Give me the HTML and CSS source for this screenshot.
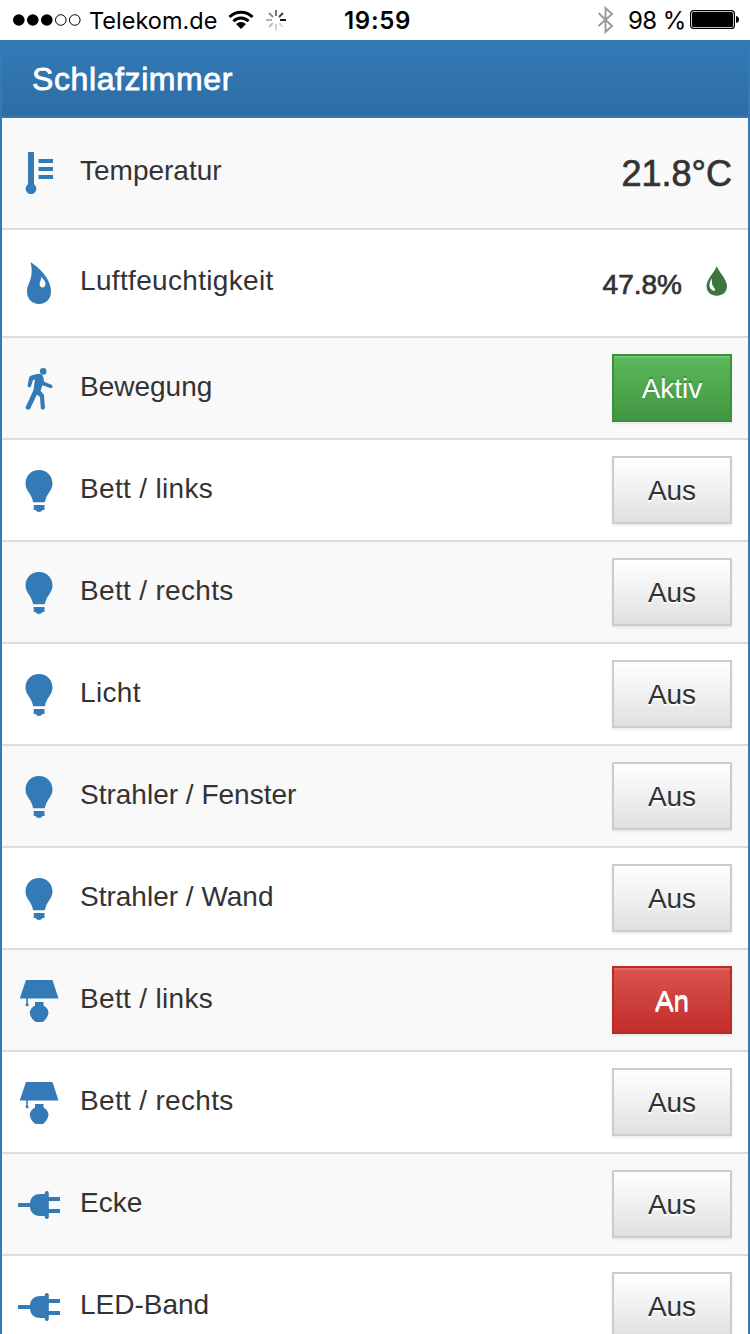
FILE: index.html
```html
<!DOCTYPE html>
<html lang="de">
<head>
<meta charset="utf-8">
<title>Schlafzimmer</title>
<link rel="stylesheet" href="styles.css">
</head>
<body>
<svg class="sprite" width="0" height="0" aria-hidden="true">
  <symbol id="thermo" viewBox="0 0 42 42"><path d="M10 0h6v32.200a5.400 5.400 0 1 1-6 0zM20.500 7H35v4H20.500zM20.500 15H35v4H20.500zM20.500 23H35v4H20.500z"/></symbol>
  <symbol id="drop" viewBox="0 0 42 42"><path fill-rule="evenodd" d="M12.500 0C20 5 33 16 33 29.500C33 37 28 42 21 42S9 37 9 29.500C9 21 16.500 17 12.500 0zM23.500 14.500C23 19 21.500 20 21.700 22.500C22 26.500 27.500 26.500 27.500 22C27.500 18.500 24.500 17 23.500 14.500z"/></symbol>
  <symbol id="walk" viewBox="0 0 42 42"><circle cx="25.200" cy="3.400" r="3.300"/><path d="M14 7.200L20 5.700Q25 5.500 25.300 9.500L26.200 13.800L34 17Q35.500 19 33 20.300L24.500 17.300L22.500 22.500L26 27L27 40Q25 43 22.800 40.500L22 29L19 26.500L12 41Q9 43 7.500 39.500L15.500 22L17 11.500L15 12L13 18.500Q11 20.500 9.500 18L11 10Q11.500 7.700 14 7.200z"/></symbol>
  <symbol id="bulb" viewBox="0 0 42 42"><path d="M21 0C29 0 34.500 6 34.500 13.500C34.500 21 28.500 23 26.800 32.300H15.200C13.500 23 7.500 21 7.500 13.500C7.500 6 13 0 21 0zM15.700 35H26.500V40H24.500Q23.500 42 21 42T17.500 40H15.700z"/></symbol>
  <symbol id="lamp" viewBox="0 0 42 42"><path d="M8 0H34.500L40.500 18.500H1.700z"/><path d="M8.300 18h1.600v5.500a1.500 1.500 0 1 1-1.600 0zM17 22H25.500V25.500Q30.500 28.500 30.500 33Q29.500 38.500 25 42H17.500Q12.500 38.500 11.800 33Q12 28 17 25.500z"/></symbol>
  <symbol id="plug" viewBox="0 0 42 42"><path d="M0 19H12C12.500 13 17 10 22 10H26.800V9a2 2 0 0 1 4 0V13H42V17H30.800V25H42V29H30.800V33a2 2 0 0 1-4 0V32H22C17 32 12.500 29 12 23H0z"/></symbol>
</svg>
<div class="status">
  <svg class="signal" width="68" height="14" viewBox="0 0 68 14"><g><circle cx="5.800" cy="7" r="5.800"/><circle cx="19.800" cy="7" r="5.800"/><circle cx="33.800" cy="7" r="5.800"/></g><g fill="none" stroke="#000"><circle cx="47.800" cy="7" r="5.300"/><circle cx="61.800" cy="7" r="5.300"/></g></svg>
  <span class="carrier">Telekom.de</span>
  <svg class="wifi" width="26" height="20" viewBox="0 0 26 20"><g fill="none" stroke="#000" stroke-width="3"><path d="M1.500 7A16.300 16.300 0 0 1 24.500 7M5.500 11.200A10.600 10.600 0 0 1 20.500 11.200"/></g><path d="M8 14Q13 9.800 18 14L13 19z"/></svg>
  <svg class="spinner" width="20" height="20" viewBox="0 0 20 20"><g fill="none" stroke-width="1.800"><path stroke="#666" d="M10 0v6"/><path stroke="#333" d="M17 3L13 7"/><path stroke="#000" d="M14 10h6"/><path stroke="#ddd" d="M13 13l4 4"/><path stroke="#ccc" d="M10 14v6"/><path stroke="#bbb" d="M7 13l-4 4"/><path stroke="#aaa" d="M6 10H0"/><path stroke="#888" d="M7 7L3 3"/></g></svg>
  <span class="time">19:59</span>
  <svg class="bluetooth" width="17" height="28" viewBox="0 0 17 28"><path fill="none" stroke="#999" stroke-width="1.900" d="M1.500 7L15 20L8.500 26V2L15 8L1.500 20"/></svg>
  <span class="percent">98 %</span>
  <svg class="battery" width="50" height="20" viewBox="0 0 50 20"><rect x=".6" y=".6" width="43.800" height="17.800" rx="3" fill="none" stroke="#000" stroke-width="1.200"/><rect x="2" y="2" width="41" height="15" rx="1.500"/><path d="M46 6q3 .5 3 3.500t-3 3.500z"/></svg>
</div>
<main class="panel">
  <h1 class="title"><span class="title-text">Schlafzimmer</span></h1>
  <div class="row row-temp"><svg class="icon"><use href="#thermo"/></svg><span class="label">Temperatur</span><span class="value value-temp">21.8°C</span></div>
  <div class="row row-hum"><svg class="icon"><use href="#drop"/></svg><span class="label label-wide">Luftfeuchtigkeit</span><span class="value value-hum">47.8%</span><svg class="comfort" width="22" height="30" viewBox="0 0 22 30"><path fill="#3c763d" d="M10.800 0C12 5 21 13 21 20C21 26 16.500 29.800 10.800 29.800S.5 26 .5 20C.5 13 9.600 5 10.800 0z"/><path fill="#fff" d="M6 12.500C2.500 17 2 23.500 8.500 25C9.800 24 9 22.500 7.300 20.700Q5.500 18.500 6 12.500z"/></svg></div>
  <div class="row"><svg class="icon"><use href="#walk"/></svg><span class="label">Bewegung</span><button class="btn btn-success">Aktiv</button></div>
  <div class="row"><svg class="icon"><use href="#bulb"/></svg><span class="label label-wide">Bett / links</span><button class="btn">Aus</button></div>
  <div class="row"><svg class="icon"><use href="#bulb"/></svg><span class="label label-wide">Bett / rechts</span><button class="btn">Aus</button></div>
  <div class="row"><svg class="icon"><use href="#bulb"/></svg><span class="label label-wide">Licht</span><button class="btn">Aus</button></div>
  <div class="row"><svg class="icon"><use href="#bulb"/></svg><span class="label">Strahler / Fenster</span><button class="btn">Aus</button></div>
  <div class="row"><svg class="icon"><use href="#bulb"/></svg><span class="label">Strahler / Wand</span><button class="btn">Aus</button></div>
  <div class="row"><svg class="icon"><use href="#lamp"/></svg><span class="label label-wide">Bett / links</span><button class="btn btn-danger">An</button></div>
  <div class="row"><svg class="icon"><use href="#lamp"/></svg><span class="label label-wide">Bett / rechts</span><button class="btn">Aus</button></div>
  <div class="row"><svg class="icon"><use href="#plug"/></svg><span class="label">Ecke</span><button class="btn">Aus</button></div>
  <div class="row"><svg class="icon"><use href="#plug"/></svg><span class="label">LED-Band</span><button class="btn">Aus</button></div>
</main>
</body>
</html>
```
FILE: styles.css
```css
* { box-sizing: border-box; }
body {
  margin: 0;
  height: 1334px;
  overflow: hidden;
  background: #fff;
  color: #333;
  font-family: "Liberation Sans", Arial, sans-serif;
  font-size: 28px;
}
.sprite { display: block; }
.status {
  display: flex;
  align-items: center;
  height: 40px;
  padding-left: 13px;
  color: #000;
  font-family: Inter, Roboto, sans-serif;
  font-size: 24px;
  line-height: 40px;
  white-space: nowrap;
}
.status svg, .status span { flex: none; }
.status span { padding-top: 2px; }
.carrier { width: 138px; margin-left: 8px; font-size: 23.5px; }
.wifi { margin-left: 1px; }
.spinner { margin-left: 12px; }
.time { width: 252px; margin-left: 58px; font-weight: 600; letter-spacing: 0.7px; }
.bluetooth { margin-left: 1px; }
.percent { width: 63px; margin-left: 14px; letter-spacing: -0.6px; }
.battery { margin-left: -1px; }
.panel { border: solid #337ab7; border-width: 0 2px; }
.title {
  height: 78px;
  margin: 0;
  padding-left: 30px;
  border-bottom: 2px solid #337ab7;
  background: linear-gradient(#337ab7, #2e6da4);
  color: #fff;
  font-size: 32px;
  font-weight: 400;
  letter-spacing: 0.6px;
  line-height: 78px;
  -webkit-text-stroke: 0.8px #fff;
}
.row {
  display: flex;
  align-items: flex-start;
  height: 102px;
  padding: 30px 16px 0;
  border-bottom: 2px solid #ddd;
  background: #fff;
}
.row:nth-child(even) { background: #f9f9f9; }
.row-temp { height: 112px; padding-top: 34px; }
.row-hum { height: 108px; padding-top: 32px; }
.icon { flex: none; width: 42px; height: 42px; fill: #337ab7; }
.label { flex: 1; margin-left: 20px; line-height: 38px; white-space: nowrap; }
.label-wide { letter-spacing: 0.33px; }
.value { -webkit-text-stroke: 0.7px #333; }
.value-temp { font-size: 36px; line-height: 44px; }
.value-hum { margin-right: 24px; line-height: 46px; }
.comfort { margin: 4px 4px 0 0; }
.btn {
  width: 120px;
  height: 68px;
  margin-top: -14px;
  padding: 2px 0 0;
  border: 2px solid #ccc;
  border-radius: 0;
  background: linear-gradient(#fff, #e0e0e0);
  box-shadow: inset 0 2px 0 rgba(255,255,255,.15), 0 2px 2px rgba(0,0,0,.075);
  color: #333;
  font: 28px/62px "Liberation Sans", Arial, sans-serif;
  text-shadow: 0 2px 0 #fff;
}
.btn-success {
  border-color: #3e8f3e;
  background: linear-gradient(#5cb85c, #419641);
  color: #fff;
  text-shadow: 0 -2px 0 rgba(0,0,0,.2);
}
.btn-danger {
  border-color: #b92c28;
  background: linear-gradient(#d9534f, #c12e2a);
  color: #fff;
}
```
